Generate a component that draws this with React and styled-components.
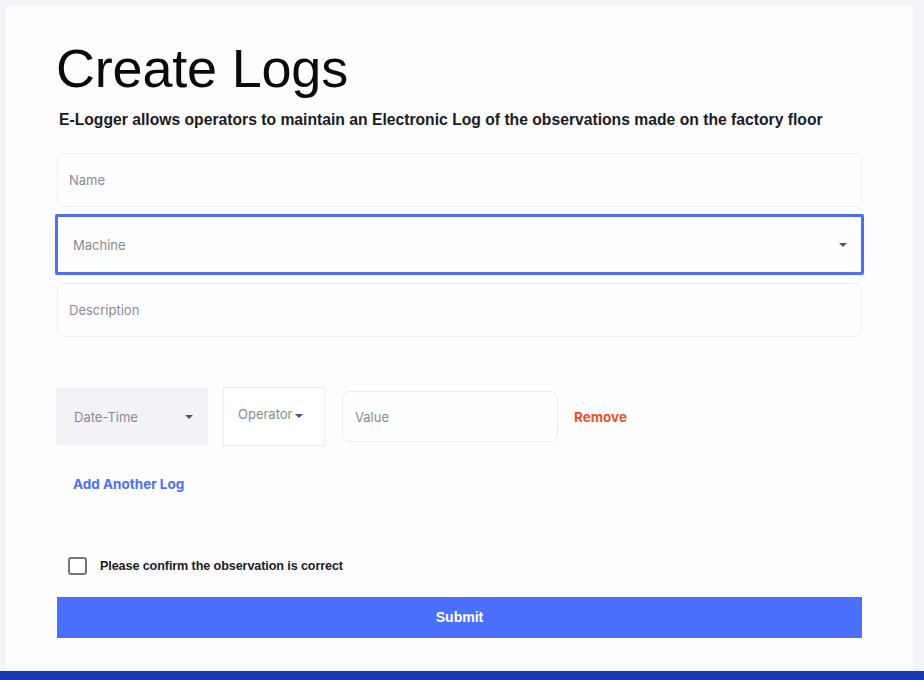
import React from "react";
import styled, { createGlobalStyle } from "styled-components";

const Global = createGlobalStyle`
  html, body { margin: 0; padding: 0; }
  body {
    background: #f4f3f7;
    font-family: "Liberation Sans", Arial, sans-serif;
    width: 924px;
    height: 680px;
    overflow: hidden;
  }
`;

const Page = styled.div`
  display: flex;
  flex-direction: column;
  height: 680px;
`;

const Stage = styled.div`
  flex: 1;
  padding: 6px 11px 1px 6px;
  display: flex;
`;

const Card = styled.main`
  flex: 1;
  background: #fdfcfe;
  padding: 31px 51px 0 50px;
  display: flex;
  flex-direction: column;
`;

const BottomBand = styled.div`
  height: 9px;
  background: #1a3ab4;
`;

const Title = styled.h1`
  margin: 0;
  font-family: "Liberation Sans", Arial, sans-serif;
  font-weight: 400;
  font-size: 54px;
  line-height: 62px;
  color: #0b0b0d;
  letter-spacing: -0.2px;
`;

const Subtitle = styled.p`
  margin: 12px 0 0 3px;
  font-family: "Liberation Sans", Arial, sans-serif;
  font-weight: 700;
  font-size: 15.7px;
  line-height: 18px;
  color: #1b1b1f;
  white-space: nowrap;
`;

const Field = styled.div`
  display: flex;
  align-items: center;
  justify-content: space-between;
  box-sizing: border-box;
  height: ${(p) => (p.$focused ? "61px" : "54px")};
  margin: ${(p) => p.$mt}px ${(p) => (p.$focused ? "-2px" : "0")} 0 ${(p) => (p.$focused ? "-1px" : "1px")};
  padding: 0 ${(p) => (p.$focused ? "14px" : "12px")} 0 ${(p) => (p.$focused ? "15px" : "11px")};
  background: #fefdff;
  border: ${(p) => (p.$focused ? "3px solid #4c6ef8" : "1px solid #efedf4")};
  border-radius: ${(p) => (p.$focused ? "2px" : "8px")};
`;

const Placeholder = styled.span`
  font-family: Inter, "Noto Sans", sans-serif;
  font-size: 13px;
  color: #8b8a92;
`;

const Caret = styled.span`
  display: inline-block;
  width: 0;
  height: 0;
  border-left: 4px solid transparent;
  border-right: 4px solid transparent;
  border-top: 4px solid ${(p) => p.$color || "#55545c"};
  margin-left: ${(p) => p.$ml || 0}px;
  margin-top: ${(p) => p.$mt || 0}px;
`;

const LogRow = styled.div`
  display: flex;
  align-items: center;
  margin-top: 50px;
`;

const DateSelect = styled.div`
  box-sizing: border-box;
  width: 152px;
  height: 57px;
  background: #f3f2f7;
  display: flex;
  align-items: center;
  justify-content: space-between;
  padding: 0 15px 0 18px;
`;

const OperatorSelect = styled.div`
  box-sizing: border-box;
  width: 102px;
  height: 59px;
  margin-left: 15px;
  background: #ffffff;
  border: 1px solid #ecebf1;
  display: flex;
  align-items: center;
  padding: 0 0 5px 14px;
`;

const ValueInput = styled.div`
  box-sizing: border-box;
  width: 216px;
  height: 51px;
  margin-left: 17px;
  background: #fefdff;
  border: 1px solid #eceaf2;
  border-radius: 8px;
  display: flex;
  align-items: center;
  padding-left: 12px;
`;

const LinkButton = styled.span`
  font-family: Inter, "Noto Sans", sans-serif;
  font-weight: 700;
  font-size: 13.5px;
  line-height: 16px;
  color: ${(p) => p.$color};
`;

const RemoveLink = styled(LinkButton)`
  margin-left: 16px;
`;

const AddRow = styled.div`
  margin-top: 29px;
  padding-left: 17px;
`;

const ConfirmRow = styled.label`
  display: flex;
  align-items: center;
  margin-top: 64px;
  padding-left: 12px;
`;

const Checkbox = styled.span`
  box-sizing: border-box;
  width: 19px;
  height: 18px;
  border: 2px solid #75747b;
  border-radius: 3px;
  background: #fff;
`;

const ConfirmText = styled.span`
  margin-left: 13px;
  font-family: "Liberation Sans", Arial, sans-serif;
  font-weight: 700;
  font-size: 12.6px;
  color: #1b1b1f;
  letter-spacing: -0.1px;
`;

const SubmitButton = styled.button`
  margin: 22px 0 0 1px;
  height: 41px;
  padding-bottom: 2px;
  border: none;
  background: #4a6ffd;
  color: #fff;
  font-family: "Liberation Sans", Arial, sans-serif;
  font-weight: 700;
  font-size: 14px;
  cursor: pointer;
`;

export default function App() {
  return (
    <Page>
      <Global />
      <Stage>
        <Card>
          <Title>Create Logs</Title>
          <Subtitle>
            E-Logger allows operators to maintain an Electronic Log of the observations made on the factory floor
          </Subtitle>
          <Field $mt={24}>
            <Placeholder>Name</Placeholder>
          </Field>
          <Field $mt={7} $focused>
            <Placeholder>Machine</Placeholder>
            <Caret />
          </Field>
          <Field $mt={8}>
            <Placeholder>Description</Placeholder>
          </Field>
          <LogRow>
            <DateSelect>
              <Placeholder>Date-Time</Placeholder>
              <Caret />
            </DateSelect>
            <OperatorSelect>
              <Placeholder>Operator</Placeholder>
              <Caret $ml={2} $mt={4} />
            </OperatorSelect>
            <ValueInput>
              <Placeholder>Value</Placeholder>
            </ValueInput>
            <RemoveLink $color="#f24f25">Remove</RemoveLink>
          </LogRow>
          <AddRow>
            <LinkButton $color="#4d6ef7">Add Another Log</LinkButton>
          </AddRow>
          <ConfirmRow>
            <Checkbox />
            <ConfirmText>Please confirm the observation is correct</ConfirmText>
          </ConfirmRow>
          <SubmitButton>Submit</SubmitButton>
        </Card>
      </Stage>
      <BottomBand />
    </Page>
  );
}
